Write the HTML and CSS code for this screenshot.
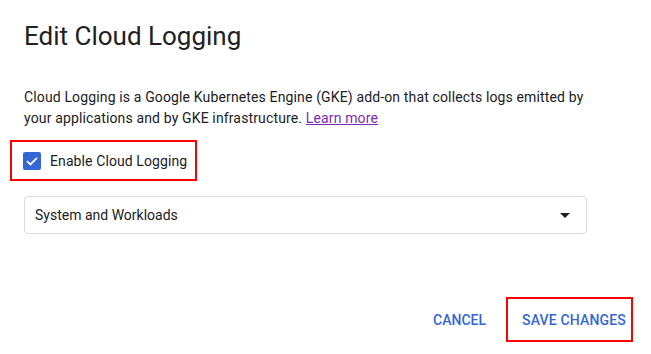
FILE: index.html
```html
<!DOCTYPE html>
<html lang="en">
<head>
    <meta charset="UTF-8">
    <meta name="viewport" content="width=device-width, initial-scale=1.0">
    <title>Edit Cloud Logging</title>
    <link rel="stylesheet" href="styles.css">
</head>
<body>
    <div class="dialog">
        <h1 class="title">Edit Cloud Logging</h1>
        <p class="description">
            Cloud Logging is a Google Kubernetes Engine (GKE) add-on that collects logs emitted by
            your applications and by GKE infrastructure. <a href="#" class="link">Learn more</a>
        </p>

        <div class="highlight check-box">
            <label class="checkbox-row">
                <span class="checkbox">
                    <svg width="18" height="18" viewBox="0 0 18 18">
                        <path d="M4 9.2 L7.4 12.4 L14 5.8" fill="none" stroke="#fff" stroke-width="1.8"/>
                    </svg>
                </span>
                <span class="checkbox-label">Enable Cloud Logging</span>
            </label>
        </div>

        <div class="select">
            <span class="select-value">System and Workloads</span>
            <span class="select-arrow"></span>
        </div>

        <div class="actions">
            <button class="btn">CANCEL</button>
            <div class="highlight save-box">
                <button class="btn btn-save">SAVE CHANGES</button>
            </div>
        </div>
    </div>
</body>
</html>
```

FILE: styles.css
```css
body {
    font-family: Roboto, "Noto Sans", Arial, sans-serif;
    background-color: #fff;
    color: #202124;
    margin: 0;
}

.dialog {
    width: 651px;
    height: 354px;
    box-sizing: border-box;
    padding: 20px 18px 0 24px;
}

.title {
    font-size: 26px;
    font-weight: 400;
    line-height: 32px;
    margin: 0;
}

.description {
    width: 570px;
    font-size: 14px;
    line-height: 21px;
    letter-spacing: 0.14px;
    margin: 35px 0 0 0;
}

.link {
    color: #7b2cb6;
    text-decoration: underline;
}

.highlight {
    border: 2px solid #f00;
    box-sizing: border-box;
}

.check-box {
    width: 187px;
    height: 41px;
    margin: 11px 0 0 -14px;
    display: flex;
    align-items: center;
    padding-left: 11px;
}

.checkbox-row {
    display: flex;
    align-items: center;
    gap: 9px;
    cursor: pointer;
}

.checkbox {
    width: 18px;
    height: 18px;
    background-color: #3367d6;
    border-radius: 2px;
    display: flex;
}

.checkbox-label {
    font-size: 14px;
    letter-spacing: 0.1px;
}

.select {
    width: 563px;
    height: 38px;
    margin-top: 15px;
    border: 1px solid #dadce0;
    border-radius: 4px;
    box-sizing: border-box;
    display: flex;
    align-items: center;
    justify-content: space-between;
    padding: 0 16px 0 10px;
}

.select-value {
    font-size: 14px;
}

.select-arrow {
    width: 0;
    height: 0;
    border-left: 5px solid transparent;
    border-right: 5px solid transparent;
    border-top: 5px solid #202124;
}

.actions {
    margin-top: 63px;
    display: flex;
    justify-content: flex-end;
    align-items: center;
    gap: 12px;
}

.btn {
    font-family: Roboto, "Noto Sans", Arial, sans-serif;
    font-size: 14px;
    font-weight: 500;
    color: #3367d6;
    background: none;
    border: none;
    padding: 0 8px;
    height: 36px;
    cursor: pointer;
}

.save-box {
    width: 127px;
    height: 45px;
    display: flex;
    align-items: center;
}

.btn-save {
    padding: 0 4px 0 14px;
    letter-spacing: 0.17px;
}
```
